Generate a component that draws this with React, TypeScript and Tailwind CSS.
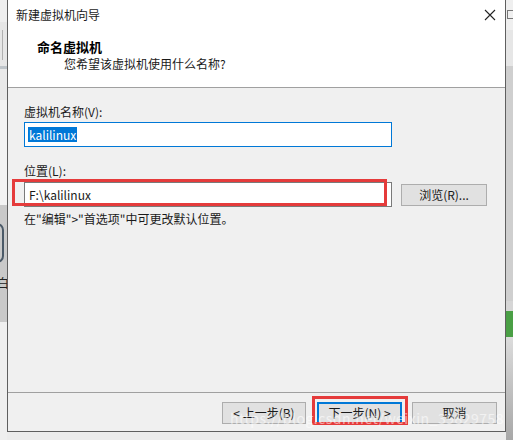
import React from "react";

const font = { fontFamily: '"Noto Sans CJK SC", "Microsoft YaHei", sans-serif' };

function Btn({ children, focused = false }: { children: React.ReactNode; focused?: boolean }) {
  return (
    <div
      className={
        "h-[22px] flex items-center justify-center text-[12px] text-[#1a1a1a] bg-[#e1e1e1] border " +
        (focused ? "border-[#0078d7] border-2" : "border-[#adadad]")
      }
    >
      {children}
    </div>
  );
}

export default function App() {
  return (
    <div className="w-[513px] h-[440px] overflow-hidden relative flex bg-[#ececec]" style={font}>
      {/* left background strip */}
      <div className="w-[7px] h-full flex flex-col">
        <div className="h-[22px] bg-[#eeeeee]" />
        <div className="h-[44px] bg-[#e6e6e6] relative">
          <div className="absolute left-[2px] top-[8px] w-px h-[30px] bg-[#b0b0b0]" />
        </div>
        <div className="h-[3px] bg-[#bfc5ca]" />
        <div className="h-[31px] bg-[#e9e9e9]" />
        <div className="h-[105px] bg-[#f3f3f3]" />
        <div className="h-[117px] bg-[#c9c9c9] relative overflow-hidden">
          <div className="absolute left-[-10px] top-[18px] w-[14px] h-[40px] rounded-full border-2 border-[#4b5a68]" />
          <div className="absolute left-[-3px] top-[70px] text-[12px] leading-[16px] text-[#222]">白</div>
        </div>
        <div className="flex-1 bg-[#efefef]" />
      </div>

      {/* dialog */}
      <div className="w-[499px] h-[432px] border-l border-r border-b border-[#5f5f5f] flex flex-col bg-[#f0f0f0]">
        {/* title bar */}
        <div className="h-[30px] bg-white flex items-center justify-between pl-[8px] pr-[9px]">
          <span className="text-[12px] text-[#1a1a1a]">新建虚拟机向导</span>
          <svg width="12" height="12" viewBox="0 0 12 12">
            <path d="M1 1 L11 11 M11 1 L1 11" stroke="#222" strokeWidth="1.1" />
          </svg>
        </div>
        {/* header */}
        <div className="h-[58px] bg-white border-b border-[#a0a0a0] flex flex-col pl-[29px] pt-[8px]">
          <span className="text-[13px] leading-[18px] font-bold text-[#000]">命名虚拟机</span>
          <span className="text-[12px] leading-[16px] text-[#1a1a1a] pl-[27px]">您希望该虚拟机使用什么名称?</span>
        </div>
        {/* body */}
        <div className="flex-1 flex flex-col pl-[16px] pt-[16px] relative">
          <span className="text-[12px] leading-[16px] text-[#1a1a1a]">虚拟机名称(V):</span>
          <div className="mt-[2px] w-[368px] h-[25px] bg-white border border-[#0078d7] flex items-center pl-[3px]">
            <span className="bg-[#0078d7] text-white text-[12px] leading-[15px] px-[1px]">kalilinux</span>
          </div>
          <span className="mt-[16px] text-[12px] leading-[16px] text-[#1a1a1a]">位置(L):</span>
          <div className="mt-[3px] flex items-center gap-[9px]">
            <div className="w-[368px] h-[25px] bg-white border border-[#7a7a7a] flex items-center pl-[4px]">
              <span className="text-[12px] text-[#1a1a1a]">F:\kalilinux</span>
            </div>
            <div className="w-[86px]">
              <Btn>浏览(R)...</Btn>
            </div>
          </div>
          <span className="mt-[4px] text-[12px] leading-[16px] text-[#1a1a1a]">在"编辑"&gt;"首选项"中可更改默认位置。</span>
          {/* red annotation */}
          <div className="absolute left-[4px] top-[91px] w-[375px] h-[27px] border-[3px] border-[#e53b3b]" />
        </div>
        {/* footer */}
        <div className="h-[39px] border-t border-[#a0a0a0] flex justify-end items-start pt-[9px] pr-[8px] gap-[10px] relative">
          <div className="w-[84px] mr-px">
            <Btn>&lt; 上一步(B)</Btn>
          </div>
          <div className="w-[85px]">
            <Btn focused>下一步(N) &gt;</Btn>
          </div>
          <div className="w-[85px]">
            <Btn>取消</Btn>
          </div>
          <div className="absolute left-[304px] top-[3px] w-[96px] h-[29px] border-[3px] border-[#e53b3b]" />
          <div className="absolute left-[222px] top-[17px] text-[14px] leading-[16px] text-white/55 tracking-[0.5px] whitespace-nowrap">
            https://blog.csdn.net/weixin_39829758
          </div>
        </div>
      </div>

      {/* right background strip */}
      <div className="w-[7px] h-full flex flex-col">
        <div className="h-[30px] bg-[#efefef] relative">
          <div className="absolute left-[1px] top-[10px] w-[8px] h-[9px] border border-[#777]" />
        </div>
        <div className="h-[36px] bg-[#e6e6e6]" />
        <div className="h-[235px] bg-[#cfcfcf]" />
        <div className="h-[10px] bg-[#d6d6d6]" />
        <div className="h-[26px] bg-[#4a9f45]" />
        <div className="flex-1 bg-gradient-to-b from-[#dcdcdc] to-[#a8a8a8]" />
      </div>
    </div>
  );
}
